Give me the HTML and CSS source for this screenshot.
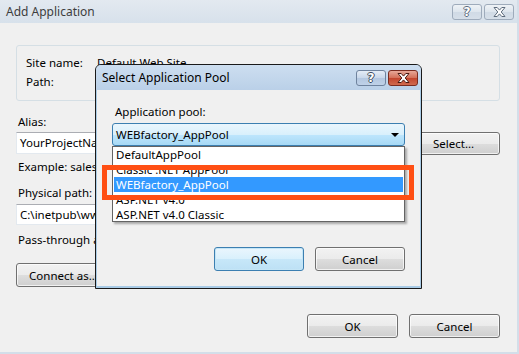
FILE: index.html
```html
<!DOCTYPE html>
<html lang="en">
<head>
    <meta charset="UTF-8">
    <title>Add Application</title>
    <link rel="stylesheet" href="styles.css">
</head>
<body>
    <div class="window">
        <div class="titlebar">
            <span class="title">Add Application</span>
            <div class="caption">
                <span class="cap cap-help">?</span>
                <span class="cap cap-close">
                    <svg width="13" height="10" viewBox="0 0 13 10"><path d="M1 0.5h3.2l2.3 2.6 2.3-2.6H12l-3.8 4.5 3.8 4.5H8.8L6.5 6.9 4.2 9.5H1l3.8-4.5z" fill="#fff" stroke="#5d6b7c" stroke-width="1" stroke-linejoin="round"/></svg>
                </span>
            </div>
        </div>
        <div class="client">
            <div class="group">
                <div class="info-row"><span class="info-label">Site name:</span><span>Default Web Site</span></div>
                <div class="info-row"><span class="info-label">Path:</span><span></span></div>
            </div>
            <div class="label label-alias">Alias:</div>
            <div class="alias-row">
                <div class="textbox alias-box">YourProjectName</div>
                <div class="textbox pool-box"></div>
                <button class="btn select-btn">Select...</button>
            </div>
            <div class="label label-hint">Example: sales</div>
            <div class="label label-path">Physical path:</div>
            <div class="path-row">
                <div class="textbox path-box">C:\inetpub\www</div>
                <button class="btn browse-btn"></button>
            </div>
            <div class="label label-pass">Pass-through authentication</div>
            <button class="btn connect-btn">Connect as...</button>
            <div class="footer">
                <button class="btn footer-btn">OK</button>
                <button class="btn footer-btn">Cancel</button>
            </div>
        </div>

        <div class="dialog">
            <div class="dialog-titlebar">
                <span class="dialog-title">Select Application Pool</span>
                <div class="caption">
                    <span class="cap cap-help active">?</span>
                    <span class="cap cap-close red">
                        <svg width="13" height="10" viewBox="0 0 13 10"><path d="M1 0.5h3.2l2.3 2.6 2.3-2.6H12l-3.8 4.5 3.8 4.5H8.8L6.5 6.9 4.2 9.5H1l3.8-4.5z" fill="#fff" stroke="#4a1a12" stroke-width="1" stroke-linejoin="round"/></svg>
                    </span>
                </div>
            </div>
            <div class="dialog-body">
                <div class="label pool-label">Application pool:</div>
                <div class="combo">
                    <span class="combo-text">WEBfactory_AppPool</span>
                    <span class="combo-arrow"></span>
                    <ul class="combo-list">
                        <li>DefaultAppPool</li>
                        <li>Classic .NET AppPool</li>
                        <li class="selected">WEBfactory_AppPool</li>
                        <li>ASP.NET v4.0</li>
                        <li>ASP.NET v4.0 Classic</li>
                    </ul>
                </div>
                <div class="dialog-footer">
                    <button class="btn footer-btn default">OK</button>
                    <button class="btn footer-btn">Cancel</button>
                </div>
            </div>
        </div>

        <div class="callout"></div>
    </div>
</body>
</html>
```

FILE: styles.css
```css
html, body {
    margin: 0;
    padding: 0;
}
body {
    width: 519px;
    height: 354px;
    overflow: hidden;
    background-color: #f0f0f0;
    font-family: 'Noto Sans', 'Open Sans', sans-serif;
    font-size: 11.5px;
    color: #000;
}
.window {
    position: relative;
    width: 517px;
    height: 352px;
    border-right: 2px solid #d3dee9;
    border-bottom: 2px solid #d3dee9;
    background-color: #f0f0f0;
}
.titlebar {
    height: 23px;
    display: flex;
    align-items: center;
    justify-content: space-between;
    padding: 0 3px 0 6px;
    background: linear-gradient(#e3e9f0, #d7e1eb);
}
.title {
    color: #3d3d3d;
    font-size: 12px;
}
.caption {
    display: flex;
    gap: 2px;
    align-self: flex-start;
    margin-top: 4px;
}
.cap {
    box-sizing: border-box;
    width: 30px;
    height: 16px;
    display: flex;
    align-items: center;
    justify-content: center;
    border: 1px solid #9eabbb;
    border-radius: 3px;
    background: linear-gradient(#eef2f6, #dde5ed 50%, #d0dae5 51%, #d6dfe9);
}
.cap-help {
    color: #fff;
    font-family: 'DejaVu Sans', sans-serif;
    font-weight: bold;
    font-size: 12px;
    text-shadow: -1px 0 #5d6b7c, 1px 0 #5d6b7c, 0 -1px #5d6b7c, 0 1px #5d6b7c;
}
.cap-help.active {
    border-color: #6f839e;
    background: linear-gradient(#e4ecf6, #c8d7ea 50%, #b3c7e0 51%, #bfd1e8);
    text-shadow: -1px 0 #3e4b5c, 1px 0 #3e4b5c, 0 -1px #3e4b5c, 0 1px #3e4b5c;
}
.cap-close.red {
    border-color: #7a2c20;
    background: linear-gradient(#e7a898, #d36f58 50%, #c2452d 51%, #d06a4f);
}

.client {
    padding: 0 17px 0 16px;
}
.group {
    margin-top: 22px;
    border: 1px solid #d5dfe5;
    border-radius: 3px;
    padding: 9px 9px 0 9px;
    height: 45px;
}
.info-row {
    display: flex;
    height: 16px;
    line-height: 16px;
    margin-bottom: 3px;
}
.info-label {
    width: 71px;
}
.label {
    height: 16px;
    line-height: 16px;
    padding-left: 2px;
}
.label-alias {
    margin-top: 13px;
}
.alias-row {
    display: flex;
    gap: 10px;
    margin-top: 2px;
}
.textbox {
    box-sizing: border-box;
    height: 22px;
    line-height: 20px;
    padding-left: 3px;
    background-color: #fff;
    border: 1px solid #e3e9ef;
    border-top-color: #abadb3;
    white-space: nowrap;
    overflow: hidden;
}
.alias-box {
    width: 170px;
}
.pool-box {
    flex: 1;
}
.btn {
    box-sizing: border-box;
    height: 24px;
    font: inherit;
    color: #000;
    border: 1px solid #707070;
    border-radius: 3px;
    background: linear-gradient(#f2f2f2, #ebebeb 50%, #dddddd 51%, #cfcfcf);
    box-shadow: inset 0 0 0 1px rgba(255,255,255,0.7);
    padding: 0;
}
.select-btn {
    width: 95px;
    height: 23px;
    text-align: left;
    padding-left: 27px;
}
.label-hint {
    margin-top: 4px;
}
.label-path {
    margin-top: 10px;
}
.path-row {
    display: flex;
    gap: 8px;
    margin-top: 3px;
    width: 380px;
}
.path-box {
    flex: 1;
    height: 21px;
}
.browse-btn {
    width: 28px;
    height: 21px;
}
.label-pass {
    margin-top: 7px;
}
.connect-btn {
    margin-top: 15px;
    width: 95px;
}
.footer {
    display: flex;
    justify-content: flex-end;
    gap: 11px;
    margin-top: 27px;
}
.footer-btn {
    width: 91px;
}

.dialog {
    position: absolute;
    left: 95px;
    top: 64px;
    width: 327px;
    height: 225px;
    box-sizing: border-box;
    border: 1px solid #1a1a1a;
    border-radius: 6px 6px 0 0;
    background: #a9cbe6;
    display: flex;
    flex-direction: column;
}
.dialog-titlebar {
    height: 25px;
    display: flex;
    justify-content: space-between;
    padding: 0 3px 0 6px;
    border-radius: 5px 5px 0 0;
    background: linear-gradient(#cddef0, #bad0e8);
}
.dialog-title {
    line-height: 26px;
    font-size: 12px;
}
.dialog-titlebar .caption {
    margin-top: 5px;
}
.dialog-body {
    flex: 1;
    margin: 0 1px 2px 1px;
    padding: 0 15px 0 15px;
    background-color: #f0f0f0;
    position: relative;
}
.pool-label {
    margin-top: 14px;
    padding-left: 3px;
}
.combo {
    position: relative;
    box-sizing: border-box;
    height: 23px;
    margin-top: 3px;
    border: 1px solid #3c7fb1;
    border-radius: 3px;
    background: linear-gradient(#eaf6fd, #d9f0fc 50%, #bee6fd 51%, #a7d9f5);
    display: flex;
    align-items: center;
    padding-left: 3px;
}
.combo-text {
    flex: 1;
}
.combo-arrow {
    width: 0;
    height: 0;
    margin-right: 5px;
    border-left: 4px solid transparent;
    border-right: 4px solid transparent;
    border-top: 4px solid #000;
}
.combo-list {
    position: absolute;
    left: -1px;
    top: 22px;
    width: 293px;
    height: 76px;
    box-sizing: border-box;
    margin: 0;
    padding: 0 1px;
    list-style: none;
    background-color: #fff;
    border: 1px solid #646464;
    box-shadow: 2px 2px 2px rgba(0,0,0,0.3);
    z-index: 2;
}
.combo-list li {
    height: 15px;
    line-height: 15px;
    padding-left: 2px;
    white-space: nowrap;
}
.combo-list li.selected {
    background-color: #3399ff;
    color: #fff;
}
.dialog-footer {
    display: flex;
    justify-content: flex-end;
    gap: 11px;
    margin-top: 101px;
}
.dialog-footer .footer-btn {
    width: 90px;
}
.btn.default {
    border-color: #3c7fb1;
    background: linear-gradient(#eaf6fd, #d9f0fc 50%, #c7e7f9 51%, #bde1f5);
    box-shadow: inset 0 0 0 1px #c4e5f6;
}

.callout {
    position: absolute;
    left: 102px;
    top: 165px;
    width: 312px;
    height: 35px;
    box-sizing: border-box;
    border: 5px solid #ff4f14;
    z-index: 3;
}
```
